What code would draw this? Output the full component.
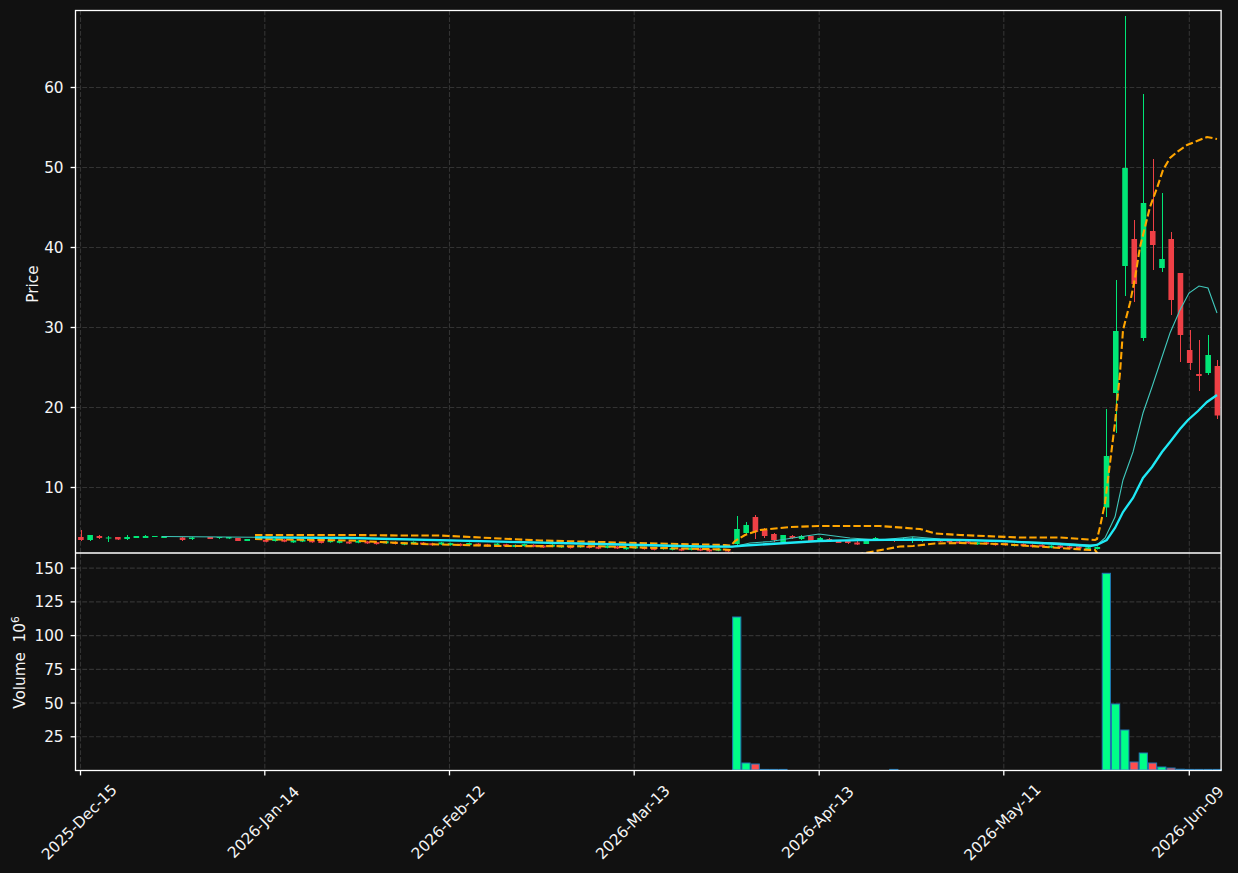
import React from "react";

const GREEN = "#00e676";
const RED = "#ef4046";
const VOL_GREEN = "#00ff88";
const VOL_RED = "#ff4d4d";

const barX = (i) => 80.7 + 9.24 * i;
const priceY = (p) => 567.5 - 8 * p;
const volY = (v) => 770.5 - 1.349 * v;

const xTicks = [
  [80.5, "2025-Dec-15"],
  [264.8, "2026-Jan-14"],
  [449.5, "2026-Feb-12"],
  [634.2, "2026-Mar-13"],
  [819.2, "2026-Apr-13"],
  [1003.8, "2026-May-11"],
  [1189.3, "2026-Jun-09"],
];
const priceTicks = [10, 20, 30, 40, 50, 60];
const volTicks = [25, 50, 75, 100, 125, 150];

// i, body top, body bottom, wick top, wick bottom, up
const candles = [
  [0, 537, 540, 530, 541, 0],
  [1, 535, 540, 535, 541, 1],
  [2, 536, 538, 535, 539, 0],
  [3, 537.5, 538.5, 536, 542, 1],
  [4, 537, 539.5, 537, 540, 0],
  [5, 537, 539, 535, 540, 1],
  [6, 536, 538, 536, 538, 1],
  [7, 536, 538, 535, 538, 1],
  [8, 536, 537, 536, 537, 1],
  [9, 536, 538, 536, 538, 1],
  [11, 537.5, 540, 537, 541, 0],
  [12, 537.5, 539, 537, 540, 1],
  [14, 537, 539, 537, 539, 0],
  [15, 537, 538, 537, 539, 1],
  [16, 537, 538.5, 537, 539, 1],
  [17, 538, 541, 538, 541, 0],
  [18, 539, 541, 539, 541, 1],
  [71, 529, 544, 516, 546, 1],
  [72, 525, 533, 522, 534, 1],
  [73, 517, 532, 515, 539, 0],
  [74, 530, 536, 528, 538, 0],
  [75, 534, 540, 533, 542, 0],
  [76, 535, 542, 535, 543, 1],
  [77, 536, 538, 535, 539, 0],
  [78, 536, 539, 535, 540, 1],
  [79, 536, 541, 536, 542, 0],
  [80, 538, 542, 537, 542, 1],
  [81, 539, 540, 538, 541, 0],
  [82, 541, 543, 540, 543, 0],
  [83, 541, 543, 540, 544, 0],
  [84, 542.5, 544.5, 540, 545, 0],
  [85, 540, 544, 539, 544, 1],
  [86, 538, 540, 537, 540, 1],
  [88, 540, 541, 539, 542, 0],
  [89, 539, 541, 538, 541, 1],
  [90, 539, 541, 537, 543, 1],
  [91, 540, 541, 539, 542, 1],
  [93, 540, 541.5, 540, 542, 0],
  [94, 541, 542.5, 541, 543, 0],
  [110, 547, 549, 546.5, 549.5, 1],
  [111, 456, 507.5, 409, 517, 1],
  [112, 331, 393, 280, 433, 1],
  [113, 168, 266, 16, 296, 1],
  [114, 239, 284, 220, 302, 0],
  [115, 203, 338, 94, 341, 1],
  [116, 231, 245, 159, 270, 0],
  [117, 259, 268, 193, 272, 1],
  [118, 239, 300, 232, 315, 0],
  [119, 273, 335, 273, 362, 0],
  [120, 350, 363, 330, 370, 0],
  [121, 374, 376, 340, 391, 0],
  [122, 355, 373, 335, 375, 1],
  [123, 366, 415.5, 360, 419, 0],
];

// low quiet stretches, mostly hidden under the bands
const quietUp = [1, 0, 0, 1, 1, 0, 1, 0, 0, 1, 0, 1];
const quietMid = (x) => (x < 640 ? 538.5 + ((x - 250) / 390) * 8 : 546.5 + ((x - 640) / 90) * 2.5);
for (let i = 20; i < 71; i++) {
  const y = quietMid(barX(i)) + (i % 3) * 0.5;
  candles.push([i, y, y + 2, y - 0.5, y + 2.5, quietUp[i % 12]]);
}
for (let i = 95; i < 110; i++) {
  const y = 541 + (i - 95) * 0.42 + (i % 2) * 0.5;
  candles.push([i, y, y + 2, y - 0.5, y + 2.5, i % 4 === 1 ? 1 : 0]);
}

const volumes = [
  [71, 617, 1], [72, 763, 1], [73, 764, 0], [74, 769.4, 1], [75, 769.4, 1], [76, 769.4, 0],
  [88, 769.4, 1], [111, 573.3, 1], [112, 704, 1], [113, 730, 1], [114, 762, 0], [115, 753, 1],
  [116, 763, 0], [117, 767, 1], [118, 768, 0], [119, 769.2, 1], [120, 769.4, 0], [121, 769.4, 0],
  [122, 769.4, 1], [123, 769.4, 0],
];

const thinStart = "162,536.5 255,537.3 350,538 500,541.5 600,544 700,546.3";
const thickLine =
  "255,537.3 350,538 500,541.7 600,544 700,546.5 732,546.6 745,545.5 770,544 819,541 860,540.2 913,539.5 960,540 1000,541 1050,543.5 1090,546 1097,545 1106.7,540 1115,528 1123,512 1133,498 1143,478 1152,467 1162,452 1170,442 1180,429 1188,420 1198,411 1207,402 1217,395";
const thinLine =
  thinStart +
  " 732,547 750,543 770,541.5 819,534 850,538 880,540 913,536.7 940,539 1000,541 1060,543 1090,545 1097,545 1105,538 1115,517 1123,480 1133,452 1143,413 1152,387 1162,357 1170,333 1180,310 1189,293 1199,286 1208,288 1217,313";
const upperBand =
  "255,535 350,535 400,535.5 440,535.5 500,538.5 540,540.5 650,543.3 725,545 731,545.5 735,541 745,535 760,530 790,527 819,526 880,526 920,529 935,533.5 960,535 1020,537.5 1060,537.5 1095,540 1097,539 1100,527 1105,503 1110,463 1115,423 1120,373 1123,330 1130,303 1135,278 1140,247 1145,227 1150,207 1157,188 1163,170 1170,158 1177,152 1187,145 1197,141 1207,137 1217,139";
const lowerBand =
  "255,539 350,540.5 420,544 500,546 600,546.3 650,547.7 725,549.5 730,550 733,554 860,554 900,546.5 913,546 935,543.5 960,543 1000,544 1060,548 1090,550 1095,550 1098,554";

const textStyle = "fill-[#f5f5f5] text-[15.28px] font-['DejaVu_Sans',sans-serif]";

function Candle({ c }) {
  const [i, top, bottom, wickTop, wickBottom, up] = c;
  const x = barX(i);
  const color = up ? GREEN : RED;
  return (
    <g fill={color}>
      <rect x={Math.round(x)} y={wickTop} width="1" height={wickBottom - wickTop} />
      <rect x={x - 2.6} y={top} width="5.6" height={bottom - top} />
    </g>
  );
}

function PriceChart() {
  return (
    <g>
      <g stroke="#333333" strokeWidth="1.1" strokeDasharray="4.8 2">
        {priceTicks.map((p) => (
          <line key={p} x1="75.5" x2="1221" y1={priceY(p)} y2={priceY(p)} />
        ))}
        {xTicks.map(([x]) => (
          <line key={x} x1={x} x2={x} y1="10.5" y2="553" />
        ))}
      </g>
      <g clipPath="url(#priceClip)">
        {candles.map((c) => (
          <Candle key={c[0]} c={c} />
        ))}
        <g fill="none">
          <polyline points={upperBand} stroke="#ffa500" strokeWidth="2.1" strokeDasharray="7.4 3" />
          <polyline points={lowerBand} stroke="#ffa500" strokeWidth="2.1" strokeDasharray="7.4 3" />
          <polyline points={thinLine} stroke="#40c8bc" strokeWidth="1.1" />
          <polyline points={thickLine} stroke="#1fe9f5" strokeWidth="2.3" />
        </g>
      </g>
    </g>
  );
}

function VolumeChart() {
  return (
    <g>
      <g stroke="#333333" strokeWidth="1.1" strokeDasharray="4.8 2">
        {volTicks.map((v) => (
          <line key={v} x1="75.5" x2="1221" y1={volY(v)} y2={volY(v)} />
        ))}
        {xTicks.map(([x]) => (
          <line key={x} x1={x} x2={x} y1="553" y2="770.5" />
        ))}
      </g>
      <g stroke="#1f77b4" strokeWidth="1">
        {volumes.map(([i, top, up]) => (
          <rect
            key={i}
            x={barX(i) - 4.1}
            y={top}
            width="8.2"
            height={770 - top}
            fill={up ? VOL_GREEN : VOL_RED}
          />
        ))}
      </g>
    </g>
  );
}

function Axes() {
  return (
    <g>
      <g fill="none" stroke="#ffffff" strokeWidth="1.3">
        <rect x="75.5" y="10.5" width="1145.6" height="760" />
        <line x1="75.5" x2="1221" y1="553" y2="553" />
        {priceTicks.map((p) => (
          <line key={p} x1="70.6" x2="75.5" y1={priceY(p)} y2={priceY(p)} />
        ))}
        {volTicks.map((v) => (
          <line key={v} x1="70.6" x2="75.5" y1={volY(v)} y2={volY(v)} />
        ))}
        {xTicks.map(([x]) => (
          <line key={x} x1={x} x2={x} y1="770.5" y2="775.4" />
        ))}
      </g>
      <g className={textStyle} textAnchor="end">
        {priceTicks.map((p) => (
          <text key={p} x="63.6" y={priceY(p) + 5.5}>
            {p}
          </text>
        ))}
        {volTicks.map((v) => (
          <text key={v} x="63.6" y={volY(v) + 5.5}>
            {v}
          </text>
        ))}
      </g>
      <g className={textStyle} textAnchor="middle">
        <text transform="translate(37.5 284) rotate(-90)">Price</text>
        <text transform="translate(25 662.5) rotate(-90)">
          {"Volume\u00a0\u00a010"}
          <tspan className="text-[10.7px]" dy="-6.5">
            6
          </tspan>
        </text>
        {xTicks.map(([x, label]) => (
          <text key={label} transform={`translate(${x - 1.5} 822) rotate(-45)`} dy="5.5">
            {label}
          </text>
        ))}
      </g>
    </g>
  );
}

function App() {
  return (
    <div className="w-[1238px] h-[873px] bg-[#111111] overflow-hidden">
      <svg width="1238" height="873" viewBox="0 0 1238 873" className="block">
        <defs>
          <clipPath id="priceClip">
            <rect x="75.5" y="10.5" width="1145.6" height="542.5" />
          </clipPath>
        </defs>
        <PriceChart />
        <VolumeChart />
        <Axes />
      </svg>
    </div>
  );
}

export default App;
